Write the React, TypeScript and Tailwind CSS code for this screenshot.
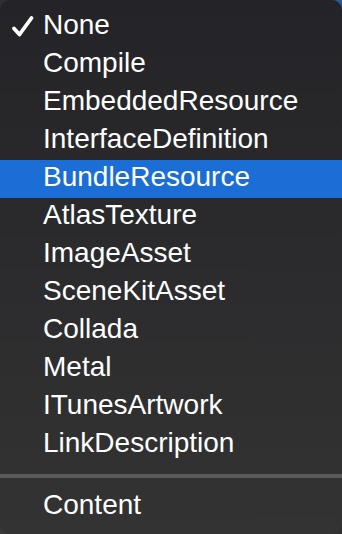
import React from 'react';

const items = [
    'None',
    'Compile',
    'EmbeddedResource',
    'InterfaceDefinition',
    'BundleResource',
    'AtlasTexture',
    'ImageAsset',
    'SceneKitAsset',
    'Collada',
    'Metal',
    'ITunesArtwork',
    'LinkDescription',
];

const CheckMark = () => (
    <svg width="24" height="24" viewBox="0 0 24 24" className="absolute left-[11px] top-[7px]">
        <path d="M3 13.5 L8.5 19.5 L20.5 3" fill="none" stroke="#ffffff" strokeWidth="3.8" strokeLinecap="round" strokeLinejoin="round" />
    </svg>
);

const MenuRow: React.FC<{ label: string; checked?: boolean; highlighted?: boolean }> = ({ label, checked, highlighted }) => (
    <div className={`relative h-[38px] pl-[43px] pb-[4px] leading-[34px] text-[28px] text-white ${highlighted ? 'bg-[#1a6ed6]' : ''}`}>
        {checked && <CheckMark />}
        {label}
    </div>
);

export default function App() {
    return (
        <div
            className="w-[342px] h-[534px] bg-[#2a2a2e] overflow-hidden"
            style={{ background: 'linear-gradient(to bottom left, #2b5c9c 0%, #262628 5%, #3a3a3a 100%)' }}
        >
            <div
                className="h-full rounded-[10px] pt-[8px] bg-gradient-to-b from-[#242428] to-[#333333]"
                style={{ fontFamily: '"Liberation Sans", Arial, sans-serif' }}
            >
                {items.map((label, i) => (
                    <MenuRow key={label} label={label} checked={i === 0} highlighted={label === 'BundleResource'} />
                ))}
                {/* separator */}
                <div className="h-[24px] pt-[10px]">
                    <div className="h-[4px] bg-[#595959]" />
                </div>
                <MenuRow label="Content" />
            </div>
        </div>
    );
}
